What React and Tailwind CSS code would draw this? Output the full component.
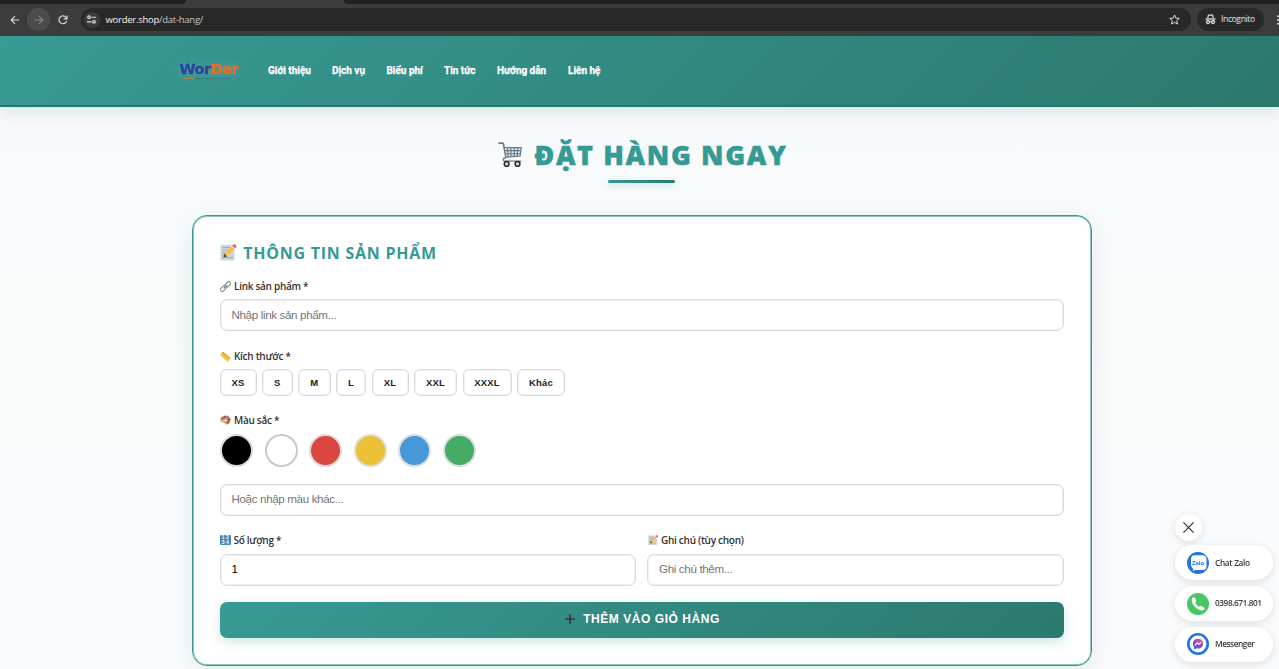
import React from "react";

const segoe = "font-['Open_Sans','Noto_Sans',sans-serif]";

function Cart({ className }) {
  return (
    <svg className={className} viewBox="0 0 26 27" fill="none">
      <path d="M1 1.6h3.6c.5 0 .9.3 1 .8L8.500 16.500" stroke="#6b7c8a" strokeWidth="1.700" strokeLinecap="round" />
      <path d="M6.300 6.300H24.200L23 15.200 8.200 16.200Z" fill="#dfe5ea" stroke="#6b7c8a" strokeWidth="1.300" strokeLinejoin="round" />
      <path d="M7 9.500h16.800M7.600 12.700h15.700M9.800 6.500l.9 9.500M13.300 6.500l.3 9.300M16.900 6.500v9M20.500 6.500l-.5 9" stroke="#6b7c8a" strokeWidth="1.200" />
      <path d="M8.500 16.500c-2.500.6-3.200 1.500-2.900 2.800.2.800.8 1.100 1.700 1.100H23.800" stroke="#6b7c8a" strokeWidth="1.400" strokeLinecap="round" />
      <circle cx="9" cy="23.300" r="2.500" fill="#cfd7dd" stroke="#252a30" strokeWidth="1.500" />
      <circle cx="20.300" cy="23.300" r="2.500" fill="#cfd7dd" stroke="#252a30" strokeWidth="1.500" />
    </svg>
  );
}

function Memo({ className }) {
  return (
    <svg className={className} viewBox="0 0 17 17" fill="none">
      <rect x="0.500" y="0.800" width="14" height="15.700" rx="1" fill="#cbd5dd" />
      <path d="M2.500 3.500h8M2.500 6h6M2.500 8.500h4M2.500 11h3M2.500 13.500h10" stroke="#9aaab6" strokeWidth="0.900" />
      <path d="M4.300 9.600 12.200 2l2.600 2.600-7.700 7.800-3.600.9Z" fill="#fdc24f" />
      <path d="m5.800 11 7.700-7.700" stroke="#f0a52f" strokeWidth="0.800" />
      <path d="m12.200 2 1.300-1.300c.5-.5 1.300-.5 1.900.1l.6.600c.6.600.6 1.300.1 1.800l-1.300 1.400Z" fill="#ea596e" />
      <path d="m11.600 2.600.9-.8L15 4.300l-.8.900Z" fill="#d5dce1" />
      <path d="m4.300 9.600-.9 3.900 3.700-1.100Z" fill="#4b4b50" />
    </svg>
  );
}

function Link({ className }) {
  return (
    <svg className={className} viewBox="0 0 11 11" fill="none" stroke="#82909b" strokeWidth="1.150" strokeLinecap="round">
      <rect x="4.600" y="1.600" width="6.400" height="3.700" rx="1.850" transform="rotate(-45 7.800 3.450)" />
      <rect x="0" y="5.700" width="6.400" height="3.700" rx="1.850" transform="rotate(-45 3.200 7.550)" />
      <path d="m4 7 3-3" />
    </svg>
  );
}

function Ruler({ className }) {
  return (
    <svg className={className} viewBox="0 0 11 11" fill="none">
      <path d="M.5 3.200 3.200.5 10.700 7.200 8 10.500Z" fill="#fbc13c" />
      <path d="M.5 3.200 8 10.500l-.1.500L.4 4Z" fill="#e89a20" />
      <path d="m3.600 1-1 1.100M5.200 2.500 3.900 3.800M6.700 3.900l-1 1M8.200 5.200 6.900 6.600M9.600 6.500l-1 1.100" stroke="#725631" strokeWidth="0.700" />
    </svg>
  );
}

function Palette({ className }) {
  return (
    <svg className={className} viewBox="0 0 11 10" fill="none">
      <path d="M5.300.6C8.500.6 10.600 2.500 10.600 5c0 2.400-1.900 4.500-4.200 4.500-1.800 0-1.200-1.600-2.400-1.800C2.500 7.400.4 7.400.4 4.800.4 2.300 2.500.6 5.300.6Z" fill="#d59377" />
      <circle cx="2.500" cy="3.300" r="1.100" fill="#a65443" />
      <circle cx="5" cy="1.900" r="1" fill="#38617e" />
      <circle cx="7.500" cy="2.500" r="1" fill="#df3549" />
      <circle cx="9" cy="4.700" r="1.100" fill="#b51f38" />
      <circle cx="8" cy="7.400" r="1.100" fill="#7b5944" />
      <circle cx="2.700" cy="5.800" r=".9" fill="#f2d0a8" />
      <ellipse cx="5.500" cy="5.600" rx="1.200" ry=".9" fill="#fff" />
    </svg>
  );
}

function Numbers({ className }) {
  return (
    <span className={`${className} grid grid-cols-2 grid-rows-2 place-items-center rounded-[1px] bg-[#4289c1] px-px font-['Liberation_Sans',sans-serif] text-[5px] leading-none font-bold text-white`}>
      <span>1</span><span>2</span><span>3</span><span>4</span>
    </span>
  );
}

function Browser() {
  return (
    <div className="h-[35.500px] shrink-0 bg-[#3c3c3c]">
      <div className="flex h-1 justify-between">
        <div className="w-[186px] rounded-br-[5px] bg-[#1f2020]" />
        <div className="w-[935px] rounded-bl-[5px] bg-[#1f2020]" />
      </div>
      <div className="flex h-[31px] items-center overflow-hidden text-[#e3e3e3]">
        <div className="flex w-[27px] shrink-0 justify-end pr-[7.500px]">
          <svg className="size-[10px]" viewBox="0 0 10 10" fill="none" stroke="#d8d8d8" strokeWidth="1.200"><path d="M9.200 5H1.500M5 1.200 1.200 5 5 8.800" /></svg>
        </div>
        <div className="flex size-[23px] shrink-0 items-center justify-center rounded-full bg-[#4c4c4c]">
          <svg className="size-[10px]" viewBox="0 0 10 10" fill="none" stroke="#858585" strokeWidth="1.200"><path d="M.8 5h7.700M5 1.200 8.800 5 5 8.800" /></svg>
        </div>
        <svg className="ml-[8px] size-[10px] shrink-0" viewBox="0 0 10 10" fill="none" stroke="#d8d8d8" strokeWidth="1.200"><path d="M8.700 5.800A3.900 3.900 0 1 1 7.900 2.300L9 3.600M9 .5v3.300H5.700" /></svg>
        <div className="ml-[12.500px] flex h-[23px] w-[1110px] shrink-0 items-center rounded-full bg-[#282828] pl-[3px]">
          <div className="flex size-4 items-center justify-center rounded-full bg-[#3c3c3c]">
            <svg className="size-[9px]" viewBox="0 0 9 9" fill="none" stroke="#dedede" strokeWidth="1.150"><circle cx="2" cy="2.200" r="1.300" /><path d="M4.500 2.200H9M0 6.800h4.500" /><circle cx="7" cy="6.800" r="1.300" /></svg>
          </div>
          <div className={`ml-[6px] text-[9.500px] leading-none tracking-[-0.260px] ${segoe}`}><span className="text-[#f2f2f2]">worder.shop</span><span className="text-[#c6c6c6]">/dat-hang/</span></div>
          <svg className="mr-[11px] ml-auto size-[11px]" viewBox="0 0 11 11" fill="none" stroke="#d9d9d9" strokeWidth="1"><path d="m5.500.9 1.300 3.200 3.500.3-2.600 2.300.8 3.400-3-1.800-3 1.800.8-3.400L.7 4.400l3.500-.3Z" /></svg>
        </div>
        <div className="ml-[6px] flex h-[23px] w-[67px] shrink-0 items-center rounded-full bg-[#282828] pl-[8px]">
          <svg className="size-[11px] shrink-0" viewBox="0 0 11 11" fill="none" stroke="#dedede"><path d="M2.700 4.300 3.400 1.200h4.200l.7 3.100" strokeWidth="1.200" /><path d="M.5 5h10" strokeWidth="1.300" /><circle cx="3" cy="8" r="1.500" strokeWidth="1.300" /><circle cx="8" cy="8" r="1.500" strokeWidth="1.300" /><path d="M4.500 7.700h2" /></svg>
          <span className={`ml-[5.500px] text-[8.500px] leading-none tracking-[-0.350px] text-[#e6e6e6] ${segoe}`}>Incognito</span>
        </div>
        <svg className="ml-[12px] h-[10px] w-[3px] shrink-0" viewBox="0 0 3 10" fill="#ddd"><circle cx="2" cy="1.300" r="1" /><circle cx="2" cy="5" r="1" /><circle cx="2" cy="8.700" r="1" /></svg>
      </div>
    </div>
  );
}

const nav = [
  ["Giới thiệu", "w-[64px]"],
  ["Dịch vụ", "w-[54.500px]"],
  ["Biểu phí", "w-[57.500px]"],
  ["Tin tức", "w-[53px]"],
  ["Hướng dẫn", "w-[71px]"],
  ["Liên hệ", "w-[40px]"],
];

function Header() {
  return (
    <header className="relative z-10 flex h-[71px] shrink-0 items-center border-b-2 border-[#27776c] bg-[linear-gradient(135deg,#389a94_0%,#2b796d_100%)] pl-[179.500px] shadow-[0_4px_16px_rgba(44,122,110,0.170)]">
      <div className="w-[88.500px] drop-shadow-[0_0_6px_rgba(255,255,255,0.150)]">
        <div className="font-['DejaVu_Sans',sans-serif] text-[14.500px] leading-[16px] font-bold tracking-[-0.450px] text-[#2b43a0] [-webkit-text-stroke:0.300px_currentColor]">Wor<span className="text-[#f26a21]">Der</span></div>
        <div className="ml-[3px] flex h-[3px] items-center gap-[1.500px] font-['Liberation_Sans',sans-serif] text-[#29506f]">
          <span className="h-px w-[11px] bg-[#a9854e]" />
          <span className="text-[2.300px] leading-none font-bold tracking-[0.200px]">INTERNATIONAL LOGISTICS</span>
        </div>
      </div>
      <nav className="flex pt-[2px] font-[Roboto,sans-serif] text-[10px] leading-none font-bold whitespace-nowrap text-white">
        {nav.map(([t, w]) => <a key={t} className={`${w} shrink-0 tracking-[-0.020px] [-webkit-text-stroke:0.250px_white]`}>{t}</a>)}
      </nav>
    </header>
  );
}

const sizes = [
  ["XS", "w-[37px]"], ["S", "w-[30.500px]"], ["M", "w-[32.500px]"], ["L", "w-[30px]"],
  ["XL", "w-[37px]"], ["XXL", "w-[43px]"], ["XXXL", "w-[49px]"], ["Khác", "w-[48px]"],
];
const colors = [
  "border-[#dcdcdc] bg-black",
  "border-[#c8c8c8] bg-white",
  "border-[#dcdcdc] bg-[#db4640]",
  "border-[#dcdcdc] bg-[#ecc135]",
  "border-[#dcdcdc] bg-[#4698d8]",
  "border-[#dcdcdc] bg-[#44ac66]",
];

function Label({ icon, children, className = "" }) {
  return (
    <div className={`flex h-[14px] items-center gap-[3px] pl-[0.500px] text-[10px] leading-none font-semibold tracking-[-0.280px] whitespace-nowrap text-[#333] ${segoe} ${className}`}>
      {icon}<span>{children}</span>
    </div>
  );
}

function Field({ value, placeholder, pad = "pb-[2px]", className = "" }) {
  return (
    <input
      defaultValue={value}
      placeholder={placeholder}
      className={`block h-[32px] w-full rounded-[7px] border border-[#dadada] bg-white px-[11px] font-['Liberation_Sans',Arial,sans-serif] text-[11.600px] tracking-[-0.350px] text-black shadow-[inset_0_0_0_1px_#f1f1f1] placeholder:text-[#757575] ${pad} ${className}`}
    />
  );
}

function Pill({ icon, children }) {
  return (
    <div className={`flex h-[35px] w-[98px] items-center gap-[6.500px] rounded-full bg-white pl-[12px] text-[8.300px] leading-none font-semibold whitespace-nowrap text-[#3a3a3a] shadow-[0_2px_8px_rgba(0,0,0,0.120)] ${segoe}`}>
      {icon}{children}
    </div>
  );
}

function Contact() {
  return (
    <aside className="fixed top-[513.500px] left-[1174.500px] z-20 flex flex-col gap-[5.800px]">
      <div className="mb-[-1px] flex size-[27px] items-center justify-center rounded-full bg-white shadow-[0_2px_8px_rgba(0,0,0,0.120)]">
        <svg className="size-[11px]" viewBox="0 0 11 11" stroke="#333" strokeWidth="1.200"><path d="m.4.400 10.200 10.200M10.600.400.4 10.600" /></svg>
      </div>
      <Pill icon={
        <span className="relative flex size-[22px] shrink-0 items-center justify-center rounded-full bg-[#2173e6]">
          <svg className="absolute inset-0 size-[22px]" viewBox="0 0 22 22"><path d="M8.500 3.200h6c4 0 5 1.200 5 4.800v5.500c0 3.500-1 4.500-5 4.500H8.500c-1 .6-2 .7-3 .7.700-.6 1-1.200.6-2C4.600 15.500 4 14 4 12V8c0-3.600 1-4.800 4.500-4.800Z" fill="#fff" /></svg>
          <span className="relative left-[0.500px] text-[6px] font-bold tracking-[-0.200px] text-[#2778ed]">Zalo</span>
        </span>
      }><span className="tracking-[-0.330px]">Chat Zalo</span></Pill>
      <Pill icon={
        <svg className="size-[22px] shrink-0" viewBox="0 0 22 22"><circle cx="11" cy="11" r="11" fill="#47c665" /><path d="M5 5.300c.8-1.200 2.200-1.500 2.800-.5l1.300 2.500c.4.800-.1 1.500-.9 2.200.6 1.800 2.200 3.400 4 4.200.7-.8 1.500-1.200 2.300-.7l2.500 1.500c1 .7.4 2.200-.9 2.800C12 19 3 11 5 5.300Z" fill="#fff" /></svg>
      }><span className="tracking-[-0.450px]">0398.671.801</span></Pill>
      <Pill icon={
        <svg className="size-[22px] shrink-0" viewBox="0 0 22 22">
          <defs><linearGradient id="msg" x1="0.100" y1="1" x2="0.900" y2="0"><stop stopColor="#256df4" /><stop offset=".5" stopColor="#8a49d4" /><stop offset="1" stopColor="#f35a78" /></linearGradient></defs>
          <circle cx="11" cy="11" r="11" fill="#2173e6" /><circle cx="11" cy="11" r="8.400" fill="#fff" />
          <path d="M11 5.800c3 0 5.100 2.100 5.100 4.900s-2.100 4.900-5.100 4.900l-1.600-.2-2.300.9v-2.100a4.700 4.700 0 0 1-1.200-3.500c0-2.800 2.100-4.900 5.100-4.900Z" fill="url(#msg)" />
          <path d="m8 12.200 2.200-2.300 1.700 1.300L14 9.400" fill="none" stroke="#fff" strokeWidth="1.300" />
        </svg>
      }><span className="tracking-[-0.450px]">Messenger</span></Pill>
    </aside>
  );
}

export default function App() {
  return (
    <div className="flex h-[669px] w-[1279px] flex-col overflow-hidden bg-white">
      <Browser />
      <Header />
      <main className="flex min-h-0 flex-1 flex-col items-center bg-[linear-gradient(180deg,#f8f9fb_0%,#fafcfc_50%,#fafbfc_100%)] pl-[4px]">
        <div className="flex h-[108.500px] shrink-0 flex-col items-center pt-[32px]">
          <div className="flex h-[32px] items-center gap-[11px] pl-[3px]">
            <Cart className="h-[27px] w-[25px]" />
            <h1 className={`text-[27px] leading-[32px] font-extrabold tracking-[1.600px] whitespace-nowrap text-[#359a94] [-webkit-text-stroke:0.400px_#359a94] ${segoe}`}>ĐẶT HÀNG NGAY</h1>
          </div>
          <div className="mt-[9px] h-[3px] w-[67px] rounded-full bg-[linear-gradient(90deg,#359a94,#2b796d)] shadow-[0_2px_6px_rgba(53,154,148,0.300)]" />
        </div>
        <section className="h-[451px] w-[900px] shrink-0 rounded-[15px] border border-[#359a94] bg-white px-[27px] pt-[27px] shadow-[0_6px_26px_rgba(0,0,0,0.080),inset_0_0_0_1px_#8cc6c2]">
          <div className="flex h-[20px] items-center gap-[6px] pl-[0.800px]">
            <Memo className="relative top-[-1px] size-[17px]" />
            <h2 className={`text-[16px] leading-[20px] font-bold tracking-[0.750px] whitespace-nowrap text-[#359a94] ${segoe}`}>THÔNG TIN SẢN PHẨM</h2>
          </div>
          <Label className="mt-[16px]" icon={<Link className="size-[11px]" />}>Link sản phẩm *</Label>
          <Field className="mt-[6px]" placeholder="Nhập link sản phẩm..." />
          <Label className="mt-[18px]" icon={<Ruler className="size-[11px]" />}>Kích thước *</Label>
          <div className="mt-[6px] flex gap-[5.500px]">
            {sizes.map(([t, w]) => (
              <button key={t} className={`${w} h-[27px] rounded-[6px] border border-[#dadada] bg-white font-['Liberation_Sans',Arial,sans-serif] text-[9.500px] leading-none font-bold tracking-[0.200px] text-[#222] shadow-[inset_0_0_0_1px_#f1f1f1]`}>{t}</button>
            ))}
          </div>
          <Label className="mt-[17px]" icon={<Palette className="h-[10px] w-[11px]" />}>Màu sắc *</Label>
          <div className="mt-[7px] flex gap-[11.500px] pl-[0.500px]">
            {colors.map((c) => <button key={c} className={`size-[33px] rounded-full border-2 ${c}`} />)}
          </div>
          <Field className="mt-[17px]" pad="pb-[3px]" placeholder="Hoặc nhập màu khác..." />
          <div className="mt-[17px] grid grid-cols-2 gap-[11px]">
            <div>
              <Label icon={<Numbers className="size-[10.500px]" />}>Số lượng *</Label>
              <Field className="mt-[7px]" pad="pb-[3px]" value="1" />
            </div>
            <div>
              <Label icon={<Memo className="size-[10.500px]" />}>Ghi chú (tùy chọn)</Label>
              <Field className="mt-[7px]" pad="pb-[3px]" placeholder="Ghi chú thêm..." />
            </div>
          </div>
          <button className="mt-[15.500px] flex h-[36px] w-full items-center justify-center gap-[8px] rounded-[7px] bg-[linear-gradient(135deg,#389a94_0%,#2b796d_100%)] pb-[1px] pl-[2px] font-['Liberation_Sans',Arial,sans-serif] text-[12px] leading-none font-bold tracking-[0.550px] text-white shadow-[0_4px_12px_rgba(53,154,148,0.250)]">
            <svg className="size-[10px]" viewBox="0 0 10 10" stroke="#31373d" strokeWidth="1.700" strokeLinecap="round"><path d="M5 .9v8.200M.9 5h8.200" /></svg>
            <span>THÊM VÀO GIỎ HÀNG</span>
          </button>
        </section>
      </main>
      <Contact />
    </div>
  );
}
